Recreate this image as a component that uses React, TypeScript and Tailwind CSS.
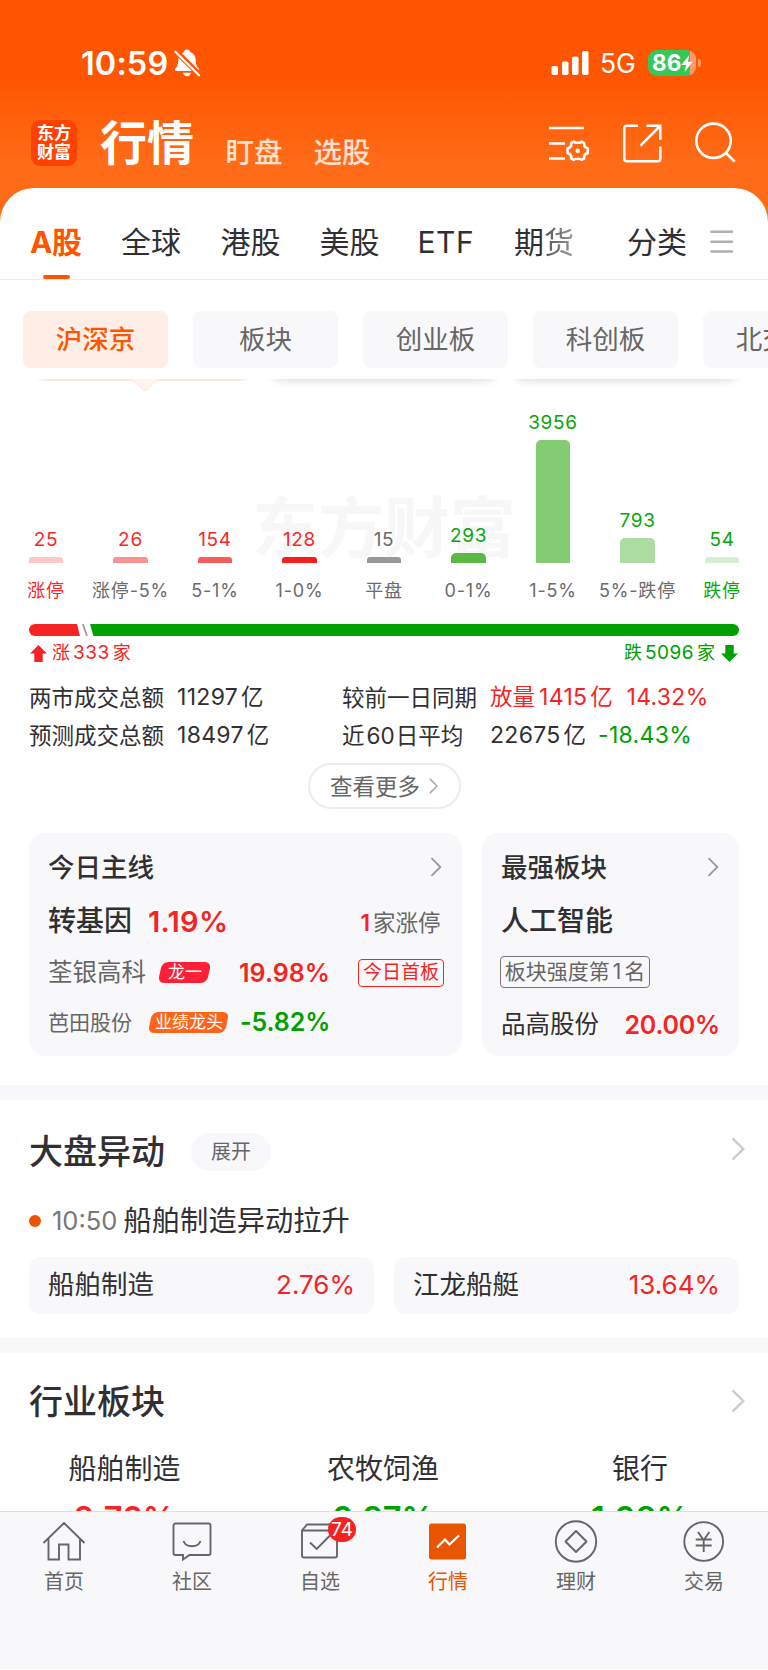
import React from "react";

const RED = "text-[#f52424]";
const GREEN = "text-[#00a000]";

const tabs = [
  { label: "全球", w: "w-[99.500px]" },
  { label: "港股", w: "w-[99px]" },
  { label: "美股", w: "w-[98px]" },
  { label: "ETF", w: "w-[96.500px] tracking-[0.500px]" },
];

const chips = ["板块", "创业板", "科创板", "北交所"];

const bars = [
  { n: "25", label: "涨停", h: "h-[6px] rounded-t-[3px]", bg: "bg-[#fcc8c8]", num: "text-[#f82828]", lab: "text-[#f82828]" },
  { n: "26", label: "涨停-5%", h: "h-[6px] rounded-t-[3px]", bg: "bg-[#fa9292]", num: "text-[#f82828]", lab: "text-[#6b6b6b]" },
  { n: "154", label: "5-1%", h: "h-[6px] rounded-t-[3px]", bg: "bg-[#f75c5c]", num: "text-[#f82828]", lab: "text-[#6b6b6b]" },
  { n: "128", label: "1-0%", h: "h-[6px] rounded-t-[3px]", bg: "bg-[#f42020]", num: "text-[#f82828]", lab: "text-[#6b6b6b]" },
  { n: "15", label: "平盘", h: "h-[6px] rounded-t-[3px]", bg: "bg-[#999999]", num: "text-[#6b6b6b]", lab: "text-[#6b6b6b]" },
  { n: "293", label: "0-1%", h: "h-[9.500px] rounded-t-[5px]", bg: "bg-[#5ab843]", num: "text-[#0aa50a]", lab: "text-[#6b6b6b]" },
  { n: "3956", label: "1-5%", h: "h-[122.500px] rounded-t-[5px]", bg: "bg-[#84cc74]", num: "text-[#0aa50a]", lab: "text-[#6b6b6b]" },
  { n: "793", label: "5%-跌停", h: "h-[24.500px] rounded-t-[5px]", bg: "bg-[#addca3]", num: "text-[#0aa50a]", lab: "text-[#6b6b6b]" },
  { n: "54", label: "跌停", h: "h-[6px] rounded-t-[3px]", bg: "bg-[#d6eed1]", num: "text-[#0aa50a]", lab: "text-[#0aa50a]" },
];

function Chevron({ className, w = 1.6 }: { className: string; w?: number }) {
  return (
    <svg viewBox="0 0 12 22" className={className} fill="none" stroke="currentColor" strokeWidth={w}>
      <path d="M1 1.2 10.8 11 1 20.8" />
    </svg>
  );
}

function StatusBar() {
  return (
    <div className="flex h-[98px] items-center pt-[28px] text-white">
      <span className="ml-[81px] w-[93px] text-[32.500px] font-semibold tracking-[0.100px]">10:59</span>
      <svg viewBox="0 0 26 28" className="h-[28px] w-[26px]" fill="white">
        <path d="M13 .6c1.800 0 3.100 1.100 3.400 2.600 3.600 1.100 5.300 4 5.300 7.800 0 5 1.600 6.800 3 8.600.9 1.200.3 2.400-1.100 2.400H2.400C1 22 .4 20.800 1.300 19.600c1.500-1.800 3-3.600 3-8.600 0-3.800 1.700-6.700 5.300-7.800C9.900 1.700 11.200.6 13 .6Z" />
        <path d="M9 23.800h8c-.5 2.300-2 3.500-4 3.500s-3.500-1.200-4-3.500Z" />
        <path d="M.2.5 26.500 26.800" stroke="#ff5500" strokeWidth="5.500" />
        <path d="M1.300 2.800 25 26.300" stroke="white" strokeWidth="2.200" strokeLinecap="round" />
      </svg>
      <svg viewBox="0 0 38 24" className="ml-[350.500px] h-[24px] w-[38px]" fill="white">
        <rect x="0.500" y="15" width="6.500" height="9" rx="1.800" />
        <rect x="11" y="10.500" width="6.500" height="13.500" rx="1.800" />
        <rect x="21" y="5.500" width="6.500" height="18.500" rx="1.800" />
        <rect x="31" y="0" width="6.500" height="24" rx="1.800" />
      </svg>
      <span className="ml-[11.500px] w-[48px] pt-[2px] text-[26.500px]">5G</span>
      <div className="flex h-[26px] w-[48px] items-center rounded-[9px] bg-[linear-gradient(90deg,#34c759_0_42px,#ff9a6b_42px)] pl-[4px]">
        <span className="text-[22.500px] leading-[26px] font-bold">86</span>
        <svg viewBox="0 0 12 18" className="h-[17px] w-[12px]" fill="white">
          <path d="M8.500 0 0 10.500h5L3.500 18 12 7.200H7L8.500 0Z" />
        </svg>
      </div>
      <span className="ml-[2px] h-[8px] w-[2.500px] rounded-r-full bg-[#ff9a6b]" />
    </div>
  );
}

function TitleBar() {
  return (
    <div className="flex h-[90px] items-center text-white">
      <div className="ml-[31px] flex h-[46px] w-[46px] flex-col items-center justify-center rounded-[9px] bg-[#ff4200] text-[17px] leading-[19px] font-bold">
        <span>东方</span>
        <span>财富</span>
      </div>
      <h1 className="ml-[23px] w-[125.500px] text-[47px] leading-[60px] font-bold">行情</h1>
      <span className="w-[88px] pt-[19px] text-[28.500px] leading-[36px] font-medium text-white/80">盯盘</span>
      <span className="w-[68px] pt-[19px] text-[28.500px] leading-[36px] font-medium text-white/80">选股</span>
      <svg viewBox="0 0 42 40" className="ml-[167px] h-[40px] w-[42px]" fill="none" stroke="white" strokeWidth="2.600">
        <path d="M0 5h35M0 20.500h16M0 35.500h16" />
        <path
          d="M24.800 18.600c1.200 1.500 6.600 1.500 7.800 0l2.600 1.500c-.3 2.600 1 4.700 3.600 5.200v4.800c-2.600.5-3.900 2.600-3.600 5.200l-2.600 1.500c-1.200-1.500-6.600-1.500-7.800 0l-2.600-1.500c.3-2.600-1-4.700-3.600-5.200v-4.800c2.600-.5 3.900-2.600 3.600-5.200Z"
          strokeLinejoin="round"
        />
        <circle cx="28.700" cy="27.700" r="2.300" fill="white" stroke="none" />
      </svg>
      <svg viewBox="0 0 40 40" className="ml-[31px] h-[40px] w-[40px]" fill="none" stroke="white" strokeWidth="2.500">
        <path d="M16 2.800H4.800a2.500 2.500 0 0 0-2.500 2.500v30.400a2.500 2.500 0 0 0 2.500 2.500h31a2.500 2.500 0 0 0 2.500-2.500V23.500" />
        <path d="M24.500 2.800h13.800v14M38 3 18.500 22.700" />
      </svg>
      <svg viewBox="0 0 42 42" className="ml-[33.500px] h-[42px] w-[42px]" fill="none" stroke="white" strokeWidth="2.600">
        <circle cx="18.500" cy="18.800" r="17.200" />
        <path d="m31 31 8.700 8.700" />
      </svg>
    </div>
  );
}

function Tabs() {
  return (
    <div className="flex h-[92px] items-center border-b border-[#ebebed] pt-[16px] text-[30px] leading-[40px] text-[#303033]">
      <div className="relative ml-[30px] w-[91px] font-bold tracking-[-0.500px] text-[#ff5500]">
        A股
        <span className="absolute top-[53px] left-[13px] h-[4px] w-[27px] rounded-full bg-[#ff5500]" />
      </div>
      {tabs.map((t) => (
        <span key={t.label} className={t.w}>{t.label}</span>
      ))}
      <span className="w-[113px]">
        期<span className="bg-[linear-gradient(90deg,#555,#999)] bg-clip-text text-transparent">货</span>
      </span>
      <span className="w-[83px]">分类</span>
      <svg viewBox="0 0 24 24" className="h-[24px] w-[24px]" stroke="#b0b0b0" strokeWidth="2.600" strokeLinecap="round">
        <path d="M1.500 1.700h20.500M1.500 11.800h20.500M1.500 21.500h20.500" />
      </svg>
    </div>
  );
}

function Chips() {
  return (
    <div className="flex h-[98px] gap-[25px] overflow-hidden pt-[30.500px] pl-[23px] text-[26.500px]">
      <div className="flex h-[57px] w-[145px] shrink-0 items-center justify-center rounded-[8px] bg-[#ffeee6] pt-[2px] font-medium text-[#ff5500]">沪深京</div>
      {chips.map((c) => (
        <div key={c} className="flex h-[57px] w-[145px] shrink-0 items-center justify-center rounded-[8px] bg-[#f8f8fa] pt-[2px] text-[#666]">{c}</div>
      ))}
    </div>
  );
}

function CardEdges() {
  return (
    <div className="mt-px flex h-[14px] items-start overflow-hidden pl-[29px]">
      <div className="flex w-[227px] flex-col">
        <div className="-mt-[32px] h-[34px] rounded-[16px] border-2 border-[#ffeadf] bg-white" />
        <svg viewBox="0 0 28 13" className="-mt-[2px] ml-[102px] h-[13px] w-[28px]" fill="#fff4ee" stroke="#ffe6d9" strokeWidth="1">
          <path d="M1 0 12 10.700q2 1.500 4 0L27 0" />
        </svg>
      </div>
      <div className="-mt-[30px] ml-[14px] h-[30px] w-[227px] rounded-[12px] bg-white shadow-[0_2px_9px_rgba(0,0,0,0.13)]" />
      <div className="-mt-[30px] ml-[16px] h-[30px] w-[226px] rounded-[12px] bg-white shadow-[0_2px_9px_rgba(0,0,0,0.13)]" />
    </div>
  );
}

function Distribution() {
  return (
    <div className="relative">
      <div className="absolute top-[96px] left-[252px] text-[66px] leading-[78px] font-bold text-[#f7f7f7]">东方财富</div>
      <div className="relative ml-[3.750px] grid h-[169.500px] w-[760.500px] grid-cols-9 items-end">
        {bars.map((b) => (
          <div key={b.label} className="flex flex-col items-center">
            <span className={`mb-[5px] text-[19px] leading-[24px] tracking-[0.700px] ${b.num}`}>{b.n}</span>
            <span className={`w-[34.500px] ${b.h} ${b.bg}`} />
          </div>
        ))}
      </div>
      <div className="ml-[3.750px] grid h-[56px] w-[760.500px] grid-cols-9 items-center text-center text-[18px] tracking-[0.800px] whitespace-nowrap">
        {bars.map((b) => (
          <span key={b.label} className={`-mx-2 ${b.lab}`}>{b.label}</span>
        ))}
      </div>
      <svg viewBox="0 0 710 12" className="mt-[5px] ml-[29px] block h-[12px] w-[710px]">
        <path d="M6 0h42l3 12H6A6 6 0 0 1 6 0Z" fill="#f52424" />
        <path d="M53 0h1.800l4 12H57Z" fill="#999" />
        <path d="M61 0h643a6 6 0 0 1 0 12H64.500Z" fill="#00a000" />
      </svg>
      <div className="flex h-[35.500px] items-center justify-between pr-[29px] pl-[30px] text-[18px]">
        <div className={`flex items-center ${RED}`}>
          <svg viewBox="0 0 17 17" className="mt-px h-[17px] w-[17px]" fill="currentColor"><path d="M8.500 0 17 8.500H12.700V17H4.300V8.500H0Z" /></svg>
          <span className="ml-[5px]">涨</span>
          <span className="mx-[3px] text-[19px] tracking-[0.500px]">333</span>
          <span>家</span>
        </div>
        <div className={`flex items-center ${GREEN}`}>
          <span>跌</span>
          <span className="mx-[3px] text-[19px] tracking-[0.500px]">5096</span>
          <span>家</span>
          <svg viewBox="0 0 17 17" className="mr-px ml-[6px] h-[17px] w-[17px] rotate-180" fill="currentColor"><path d="M8.500 0 17 8.500H12.700V17H4.300V8.500H0Z" /></svg>
        </div>
      </div>
    </div>
  );
}

function Num({ children }: { children: React.ReactNode }) {
  return <span className="mr-[3px] text-[23px] tracking-[0.300px]">{children}</span>;
}

function Turnover() {
  return (
    <div className="mt-[7px] text-[22.500px] whitespace-nowrap text-[#303033]">
      <div className="flex h-[38px] items-center pl-[29px]">
        <span className="w-[148px]">两市成交总额</span>
        <span className="w-[165px]"><Num>11297</Num>亿</span>
        <span className="w-[148px]">较前一日同期</span>
        <span className={`w-[136.500px] ${RED}`}>放量<span className="ml-[4px]"><Num>1415</Num></span>亿</span>
        <span className={RED}><Num>14.32%</Num></span>
      </div>
      <div className="flex h-[38px] items-center pl-[29px]">
        <span className="w-[148px]">预测成交总额</span>
        <span className="w-[165px]"><Num>18497</Num>亿</span>
        <span className="w-[148px]">近<span className="mr-px ml-[2px] tracking-normal">60</span>日平均</span>
        <span className="w-[108px]"><Num>22675</Num>亿</span>
        <span className={GREEN}><Num>-18.43%</Num></span>
      </div>
      <button className="mx-auto mt-[9px] flex h-[46px] w-[153px] items-center justify-center rounded-full border-2 border-[#ededef] text-[22.500px] text-[#666]">
        查看更多
        <Chevron className="ml-[9px] h-[16px] w-[9px] text-[#aaa]" w={2.2} />
      </button>
    </div>
  );
}

function HighlightCards() {
  return (
    <div className="mt-[24px] flex gap-[20px] px-[29px] whitespace-nowrap text-[#303033]">
      <section className="h-[223px] w-[433px] rounded-[16px] bg-[#f8f8fa] pl-[19px]">
        <div className="flex h-[68px] items-center justify-between pr-[20px]">
          <h2 className="pt-[2px] text-[26.500px] font-medium">今日主线</h2>
          <Chevron className="h-[20px] w-[12px] text-[#999]" w={2} />
        </div>
        <div className="flex h-[40px] items-center pt-[2px]">
          <span className="w-[100px] text-[28px] font-medium">转基因</span>
          <span className={`w-[212.500px] text-[29px] font-semibold tracking-[0.300px] ${RED}`}>1.19%</span>
          <span className="text-[22.500px] text-[#666]"><b className={`mr-[3px] font-semibold ${RED}`}>1</b>家涨停</span>
        </div>
        <div className="flex h-[62px] items-center pt-px">
          <span className="w-[112px] pt-px text-[24.500px] text-[#666]">荃银高科</span>
          <span className="flex h-[21px] w-[49px] -skew-x-12 items-center justify-center rounded-[6px] bg-[#ff1f36]"><span className="skew-x-12 text-[17px] text-white">龙一</span></span>
          <span className={`ml-[30px] w-[119px] text-[25px] font-semibold tracking-[0.050px] ${RED}`}>19.98%</span>
          <span className={`flex h-[28px] w-[86px] items-center justify-center rounded-[4px] border border-[#f52424] pt-[2px] text-[19px] ${RED}`}>今日首板</span>
        </div>
        <div className="flex h-[38px] items-center">
          <span className="w-[102px] pt-px text-[21px] text-[#666]">芭田股份</span>
          <span className="flex h-[21px] w-[77px] -skew-x-12 items-center justify-center rounded-[6px] bg-[#ff6419]"><span className="skew-x-12 text-[17px] text-white">业绩龙头</span></span>
          <span className={`ml-[13px] text-[25px] font-semibold tracking-[-0.100px] ${GREEN}`}>-5.82%</span>
        </div>
      </section>
      <section className="h-[223px] w-[257px] rounded-[16px] bg-[#f8f8fa] pl-[19px]">
        <div className="flex h-[68px] items-center justify-between pr-[20px]">
          <h2 className="pt-[2px] text-[26.500px] font-medium">最强板块</h2>
          <Chevron className="h-[20px] w-[12px] text-[#999]" w={2} />
        </div>
        <div className="flex h-[40px] items-center pt-[2px] text-[28px] font-medium">人工智能</div>
        <div className="flex h-[62px] items-center">
          <span className="-ml-px flex h-[32px] w-[150px] items-center justify-center rounded-[4px] border border-[#777] text-[21px] text-[#666]">板块强度第<span className="mx-[3px]">1</span>名</span>
        </div>
        <div className="flex h-[42px] items-center justify-between pt-px pr-[19px]">
          <span className="text-[24.500px]">品高股份</span>
          <span className={`text-[25px] font-semibold tracking-[-0.200px] ${RED}`}>20.00%</span>
        </div>
      </section>
    </div>
  );
}

function Movers() {
  return (
    <section className="mt-[28.500px] border-t-[15px] border-[#f8f8fa] px-[29px] whitespace-nowrap text-[#303033]">
      <div className="flex h-[104px] items-center">
        <h2 className="pt-[2px] text-[34px] font-medium">大盘异动</h2>
        <span className="ml-[26px] flex h-[38px] w-[80px] items-center justify-center rounded-full bg-[#f8f8fa] text-[20px] text-[#666]">展开</span>
        <Chevron className="-mr-[6px] mb-[5px] ml-auto h-[24px] w-[14px] text-[#ccc]" w={2.2} />
      </div>
      <div className="flex h-[34px] items-center">
        <span className="h-[12px] w-[12px] rounded-full bg-[#ea5504]" />
        <span className="ml-[11px] w-[71.500px] pt-px text-[25.500px] text-[#777]">10:50</span>
        <span className="pt-[2px] text-[28.300px]">船舶制造异动拉升</span>
      </div>
      <div className="mt-[19px] flex gap-[20px] text-[26.500px]">
        <div className="flex h-[57px] flex-1 items-center justify-between rounded-[12px] bg-[#f8f8fa] px-[19px]">
          <span>船舶制造</span><span className={`text-[26px] ${RED}`}>2.76%</span>
        </div>
        <div className="flex h-[57px] flex-1 items-center justify-between rounded-[12px] bg-[#f8f8fa] px-[19px]">
          <span>江龙船艇</span><span className={`text-[26px] ${RED}`}>13.64%</span>
        </div>
      </div>
    </section>
  );
}

const sectors = [
  { name: "船舶制造", pct: "2.76%", c: RED, w: "w-[249px]" },
  { name: "农牧饲渔", pct: "0.97%", c: GREEN, w: "w-[268px]" },
  { name: "银行", pct: "1.08%", c: GREEN, w: "w-[246px]" },
];

function Sectors() {
  return (
    <section className="mt-[24.500px] border-t-[15px] border-[#f8f8fa] text-[#303033]">
      <div className="flex h-[96px] items-center pr-[23px] pl-[29px]">
        <h2 className="pt-[2px] text-[34px] font-medium">行业板块</h2>
        <Chevron className="mb-px ml-auto h-[24px] w-[14px] text-[#ccc]" w={2.2} />
      </div>
      <div className="flex">
        {sectors.map((s) => (
          <div key={s.name} className={`flex flex-col items-center ${s.w}`}>
            <span className="pt-px text-[28px] leading-[38px]">{s.name}</span>
            <span className={`pt-px text-[32.500px] leading-[59px] font-semibold ${s.c}`}>{s.pct}</span>
          </div>
        ))}
      </div>
    </section>
  );
}

const navItems = [
  {
    label: "首页",
    icon: <path d="M1.500 22 22 2l20.500 20M6.500 18v20.500H17V23.500h9.500v15H38V18" />,
  },
  {
    label: "社区",
    icon: (
      <>
        <path d="M5.500 2.500h33a2 2 0 0 1 2 2V32a2 2 0 0 1-2 2H19.500l-6.500 4.500V34H5.500a2 2 0 0 1-2-2V4.500a2 2 0 0 1 2-2Z" />
        <path d="M13.500 20c2.500 7 14.500 7 17 0" />
      </>
    ),
  },
  {
    label: "自选",
    icon: (
      <>
        <path d="M4 9.500 9 3.500h28M4 9.500h35v25a2 2 0 0 1-2 2H6a2 2 0 0 1-2-2v-25Z" />
        <path d="m12 21.500 6.700 6.500L32 14.500" />
      </>
    ),
  },
  {
    label: "行情",
    active: true,
    icon: (
      <>
        <rect x="3" y="2.500" width="37" height="36" rx="2.500" fill="#ea5504" stroke="none" />
        <path d="m11 26.500 8-8 4.500 5L33 14.500" stroke="white" strokeWidth="2.200" />
      </>
    ),
  },
  {
    label: "理财",
    icon: (
      <>
        <circle cx="22" cy="20.500" r="20.200" />
        <path d="M22 10 32.500 20.500 22 31 11.500 20.500Z" strokeLinejoin="round" />
      </>
    ),
  },
  {
    label: "交易",
    icon: (
      <>
        <circle cx="21.700" cy="20.500" r="19.400" />
        <path d="m16 11 5.700 8 5.700-8M21.700 19v12M13.700 18.500h16M13.700 24.500h16" />
      </>
    ),
  },
];

function BottomNav() {
  return (
    <nav className="grid h-[159px] grid-cols-6 border-t border-b border-t-[#dfdfe2] border-b-white bg-[#f8f8fa]">
      {navItems.map((n) => (
        <div key={n.label} className={`flex flex-col items-center pt-[9px] ${n.active ? "text-[#ea5504]" : "text-[#666]"}`}>
          <div className="relative h-[42px] w-[44px]">
            <svg viewBox="0 0 44 42" className="h-[42px] w-[44px] overflow-visible" fill="none" stroke="currentColor" strokeWidth="1.900">
              {n.icon}
            </svg>
            {n.label === "自选" && (
              <span className="absolute -top-[4px] left-[30px] flex h-[25px] w-[28px] items-center justify-center rounded-full bg-[#f52222] pt-px text-[19px] text-white">74</span>
            )}
          </div>
          <span className="mt-[5px] text-[20px] leading-[29px]">{n.label}</span>
        </div>
      ))}
    </nav>
  );
}

export default function App() {
  return (
    <div className="h-[1670px] w-[768px] overflow-hidden bg-[linear-gradient(180deg,#ff5500_0px,#ff5500_75px,#ff6b17_160px,#ff6d1a_240px)] font-['Inter','Noto_Sans_CJK_SC',sans-serif] leading-[1.200]">
      <div className="h-[1511px] overflow-hidden">
        <StatusBar />
        <TitleBar />
        <main className="h-[1330px] rounded-t-[34px] bg-white">
          <Tabs />
          <Chips />
          <CardEdges />
          <Distribution />
          <Turnover />
          <HighlightCards />
          <Movers />
          <Sectors />
        </main>
      </div>
      <BottomNav />
    </div>
  );
}
